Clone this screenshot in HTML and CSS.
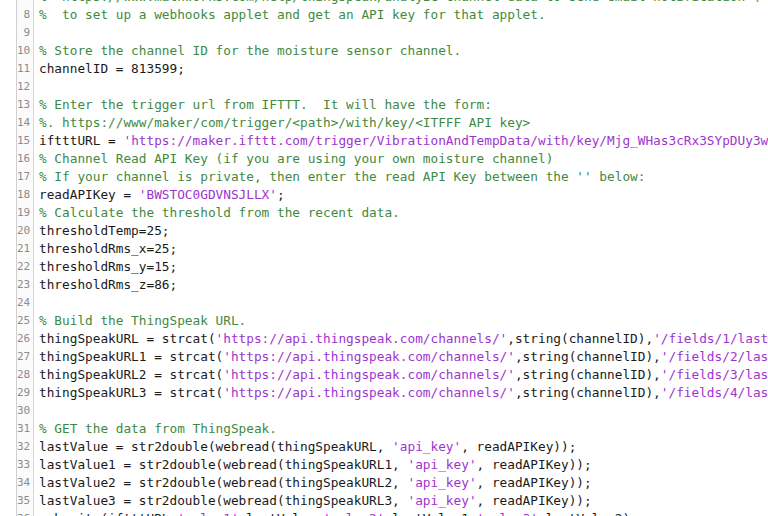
FILE: index.html
```html
<!DOCTYPE html>
<html>
<head>
<meta charset="utf-8">
<link rel="stylesheet" href="styles.css">
</head>
<body>
<div class="editor">
  <div class="gutter">
    <div class="ln">7</div><div class="ln">8</div><div class="ln">9</div><div class="ln">10</div>
    <div class="ln">11</div><div class="ln">12</div><div class="ln">13</div><div class="ln">14</div>
    <div class="ln">15</div><div class="ln">16</div><div class="ln">17</div><div class="ln">18</div>
    <div class="ln">19</div><div class="ln">20</div><div class="ln">21</div><div class="ln">22</div>
    <div class="ln">23</div><div class="ln">24</div><div class="ln">25</div><div class="ln">26</div>
    <div class="ln">27</div><div class="ln">28</div><div class="ln">29</div><div class="ln">30</div>
    <div class="ln">31</div><div class="ln">32</div><div class="ln">33</div><div class="ln">34</div>
    <div class="ln">35</div><div class="ln">36</div>
  </div>
  <div class="code">
    <div class="line"><span class="c">%  https://www.mathworks.com/help/thingspeak/analyze-channel-data-to-send-email-notification (</span></div>
    <div class="line"><span class="c">%  to set up a webhooks applet and get an API key for that applet.</span></div>
    <div class="line"> </div>
    <div class="line"><span class="c">% Store the channel ID for the moisture sensor channel.</span></div>
    <div class="line">channelID = 813599;</div>
    <div class="line"> </div>
    <div class="line"><span class="c">% Enter the trigger url from IFTTT.  It will have the form:</span></div>
    <div class="line"><span class="c">%. https://www/maker/com/trigger/&lt;path&gt;/with/key/&lt;ITFFF API key&gt;</span></div>
    <div class="line">iftttURL = <span class="s">'https://maker.ifttt.com/trigger/VibrationAndTempData/with/key/Mjg_WHas3cRx3SYpDUy3wQk'</span>;</div>
    <div class="line"><span class="c">% Channel Read API Key (if you are using your own moisture channel)</span></div>
    <div class="line"><span class="c">% If your channel is private, then enter the read API Key between the '' below:</span></div>
    <div class="line">readAPIKey = <span class="s">'BWSTOC0GDVNSJLLX'</span>;</div>
    <div class="line"><span class="c">% Calculate the threshold from the recent data.</span></div>
    <div class="line">thresholdTemp=25;</div>
    <div class="line">thresholdRms_x=25;</div>
    <div class="line">thresholdRms_y=15;</div>
    <div class="line">thresholdRms_z=86;</div>
    <div class="line"> </div>
    <div class="line"><span class="c">% Build the ThingSpeak URL.</span></div>
    <div class="line">thingSpeakURL = strcat(<span class="s">'https://api.thingspeak.com/channels/'</span>,string(channelID),<span class="s">'/fields/1/last.txt'</span>);</div>
    <div class="line">thingSpeakURL1 = strcat(<span class="s">'https://api.thingspeak.com/channels/'</span>,string(channelID),<span class="s">'/fields/2/last.txt'</span>);</div>
    <div class="line">thingSpeakURL2 = strcat(<span class="s">'https://api.thingspeak.com/channels/'</span>,string(channelID),<span class="s">'/fields/3/last.txt'</span>);</div>
    <div class="line">thingSpeakURL3 = strcat(<span class="s">'https://api.thingspeak.com/channels/'</span>,string(channelID),<span class="s">'/fields/4/last.txt'</span>);</div>
    <div class="line"> </div>
    <div class="line"><span class="c">% GET the data from ThingSpeak.</span></div>
    <div class="line">lastValue = str2double(webread(thingSpeakURL, <span class="s">'api_key'</span>, readAPIKey));</div>
    <div class="line">lastValue1 = str2double(webread(thingSpeakURL1, <span class="s">'api_key'</span>, readAPIKey));</div>
    <div class="line">lastValue2 = str2double(webread(thingSpeakURL2, <span class="s">'api_key'</span>, readAPIKey));</div>
    <div class="line">lastValue3 = str2double(webread(thingSpeakURL3, <span class="s">'api_key'</span>, readAPIKey));</div>
    <div class="line">webwrite(iftttURL,<span class="s">'value1'</span>,lastValue,<span class="s">'value2'</span>,lastValue1,<span class="s">'value3'</span>,lastValue2);</div>
  </div>
</div>
</body>
</html>
```
FILE: styles.css
```css
html, body {
  margin: 0;
  padding: 0;
  background: #ffffff;
  overflow: hidden;
}

.editor {
  display: flex;
  margin-top: -12px;
  width: 768px;
  height: 540px;
  overflow: hidden;
}

.gutter {
  margin-left: 16px;
  width: 16px;
  flex: 0 0 16px;
  border-left: 1px solid #cfcfcf;
  border-right: 1px solid #d6d6d6;
  background: #fbfbfb;
  font-family: "DejaVu Sans Mono", monospace;
  font-size: 11px;
  color: #8c8c8c;
}

.ln {
  height: 18px;
  line-height: 18px;
  text-align: right;
  padding-right: 3px;
}

.code {
  flex: 1;
  min-width: 0;
  padding-left: 5px;
  font-family: "DejaVu Sans Mono", monospace;
  font-size: 12.75px;
  color: #1a1a1a;
  overflow: hidden;
}

.line {
  height: 18px;
  line-height: 18px;
  white-space: pre;
}

.c {
  color: #3f8a3f;
}

.s {
  color: #9d34cf;
}
```
